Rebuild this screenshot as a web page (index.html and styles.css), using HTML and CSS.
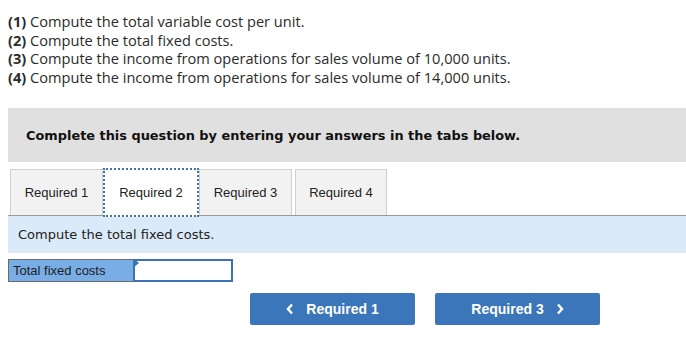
FILE: index.html
```
<!DOCTYPE html>
<html lang="en">
<head>
  <meta charset="UTF-8" />
  <title>Required 2</title>
  <link rel="stylesheet" href="styles.css">
</head>
<body>
  <div class="questions">
    <div><b>(1)</b> Compute the total variable cost per unit.</div>
    <div><b>(2)</b> Compute the total fixed costs.</div>
    <div><b>(3)</b> Compute the income from operations for sales volume of 10,000 units.</div>
    <div><b>(4)</b> Compute the income from operations for sales volume of 14,000 units.</div>
  </div>

  <div class="instructions">Complete this question by entering your answers in the tabs below.</div>

  <div class="tabs">
    <div class="tab">Required 1</div>
    <div class="tab tab-active">Required 2</div>
    <div class="tab">Required 3</div>
    <div class="tab tab-last">Required 4</div>
  </div>

  <div class="prompt">Compute the total fixed costs.</div>

  <div class="answer-row">
    <div class="answer-label">Total fixed costs</div>
    <div class="answer-input"><span class="flag"></span></div>
  </div>

  <div class="nav">
    <button class="nav-button">
      <svg width="8" height="12" viewBox="0 0 8 12"><path d="M6 1.5 L2 6 L6 10.5" fill="none" stroke="#fff" stroke-width="2.4"/></svg>
      <span>Required 1</span>
    </button>
    <button class="nav-button">
      <span>Required 3</span>
      <svg width="8" height="12" viewBox="0 0 8 12"><path d="M2 1.5 L6 6 L2 10.5" fill="none" stroke="#fff" stroke-width="2.4"/></svg>
    </button>
  </div>
</body>
</html>
```

FILE: styles.css
```
body {
  margin: 0;
  padding: 0;
  background: #fff;
  color: #222;
  width: 686px;
  overflow: hidden;
}

.questions {
  padding: 12px 0 0 8px;
  font-family: 'Open Sans', 'Lato', sans-serif;
  font-size: 14.6px;
  line-height: 18.5px;
  color: #2b2b2b;
}

.questions b {
  font-weight: bold;
}

.instructions {
  margin: 22px 0 0 8px;
  height: 54px;
  padding-left: 18px;
  background: #e0e0e0;
  display: flex;
  align-items: center;
  font-family: 'DejaVu Sans', Verdana, sans-serif;
  font-weight: bold;
  font-size: 12.9px;
  color: #111;
}

.tabs {
  margin: 7px 0 0 8px;
  padding-left: 2px;
  display: flex;
  border-bottom: 1px solid #9a9a9a;
}

.tab {
  width: 93px;
  height: 46px;
  box-sizing: border-box;
  border: 1px solid #cfcfcf;
  border-bottom: none;
  background: #f2f2f2;
  display: flex;
  align-items: center;
  justify-content: center;
  font-family: 'Liberation Sans', Arial, sans-serif;
  font-size: 13px;
  color: #222;
}

.tab-active {
  width: 96px;
  height: 49px;
  margin-top: -1px;
  margin-bottom: -2px;
  background: #fff;
  border: 2px dotted #3b73b9;
}

.tab-last {
  margin-left: 3px;
  width: 92px;
}

.prompt {
  margin-left: 8px;
  height: 37px;
  padding-left: 10px;
  background: #daeaf8;
  display: flex;
  align-items: center;
  font-family: 'DejaVu Sans', Verdana, sans-serif;
  font-size: 13px;
  color: #222;
}

.answer-row {
  margin: 6px 0 0 8px;
  display: flex;
}

.answer-label {
  width: 125px;
  height: 23px;
  box-sizing: border-box;
  border: 1px solid #6b6b6b;
  border-right: none;
  background: #79ade6;
  padding-left: 4px;
  display: flex;
  align-items: center;
  font-family: 'Liberation Sans', Arial, sans-serif;
  font-size: 13px;
  color: #222;
}

.answer-input {
  position: relative;
  width: 100px;
  height: 23px;
  box-sizing: border-box;
  border: 2px solid #3d72b4;
  background: #fff;
}

.flag {
  position: absolute;
  top: -2px;
  left: -1px;
  width: 0;
  height: 0;
  border-top: 4px solid transparent;
  border-bottom: 4px solid transparent;
  border-left: 5px solid #3d72b4;
}

.nav {
  margin-top: 11px;
  padding-left: 250px;
  display: flex;
  gap: 20px;
}

.nav-button {
  width: 165px;
  height: 32px;
  border: none;
  border-radius: 2px;
  background: #3a76b9;
  color: #fff;
  display: flex;
  align-items: center;
  justify-content: center;
  gap: 12px;
  font-family: 'Liberation Sans', Arial, sans-serif;
  font-weight: bold;
  font-size: 14px;
  padding: 0;
}
```
